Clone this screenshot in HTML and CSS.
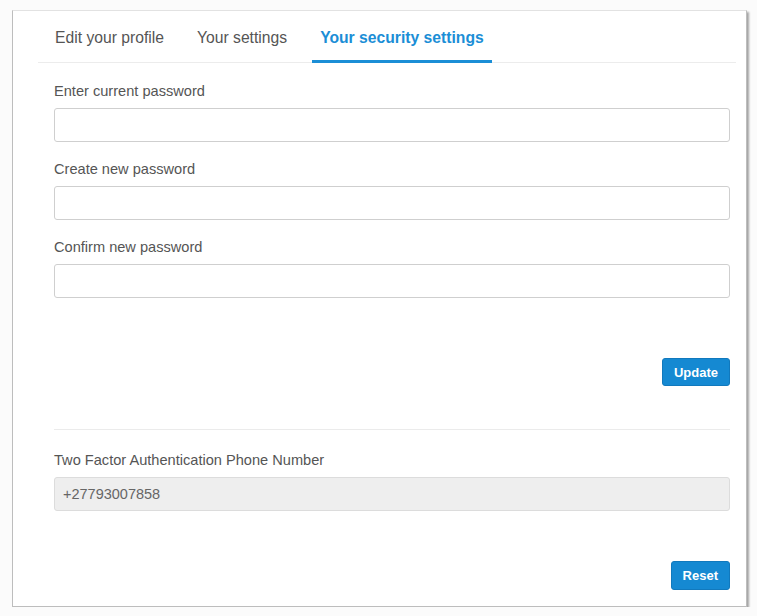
FILE: index.html
```html
<!DOCTYPE html>
<html lang="en">
<head>
<meta charset="utf-8">
<title>Your security settings</title>
<link rel="stylesheet" href="styles.css">
</head>
<body>
<div class="card">
  <nav class="tabs">
    <a class="tab">Edit your profile</a>
    <a class="tab">Your settings</a>
    <a class="tab active">Your security settings</a>
  </nav>
  <form class="form">
    <div class="field">
      <label class="label">Enter current password</label>
      <input class="input" type="password">
    </div>
    <div class="field">
      <label class="label">Create new password</label>
      <input class="input" type="password">
    </div>
    <div class="field">
      <label class="label">Confirm new password</label>
      <input class="input" type="password">
    </div>
    <div class="actions actions-update">
      <button type="button" class="btn">Update</button>
    </div>
    <hr class="sep">
    <div class="field">
      <label class="label">Two Factor Authentication Phone Number</label>
      <input class="input input-disabled" type="text" value="+27793007858" disabled>
    </div>
    <div class="actions actions-reset">
      <button type="button" class="btn">Reset</button>
    </div>
  </form>
</div>
</body>
</html>
```
FILE: styles.css
```css
* { box-sizing: border-box; }
html, body { margin: 0; padding: 0; }
body {
  background: #fbfbfb;
  font-family: "Liberation Sans", Arial, sans-serif;
  color: #555;
}
.card {
  margin: 10px 0 0 12px;
  width: 735px;
  height: 597px;
  background: #fff;
  border: 1px solid #bdbdbd;
  border-top-color: #e2e2e2;
  box-shadow: 2px 2px 2px rgba(0, 0, 0, 0.35);
}
.tabs {
  display: flex;
  gap: 17px;
  margin: 0 10px 0 25px;
  padding-left: 9px;
  border-bottom: 1px solid #ececec;
}
.tab {
  display: block;
  padding: 17px 8px 12px;
  line-height: 20px;
  font-size: 15.7px;
  color: #555;
  border-bottom: 3px solid transparent;
  margin-bottom: -1px;
  white-space: nowrap;
}
.tab.active {
  color: #1b8ed6;
  font-weight: bold;
  border-bottom-color: #1b8ed6;
}
.form {
  padding: 18px 16px 0 41px;
}
.field {
  display: flex;
  flex-direction: column;
  margin-bottom: 17px;
}
.label {
  font-size: 14.6px;
  line-height: 20px;
  margin-bottom: 7px;
  color: #555;
}
.input {
  height: 34px;
  width: 100%;
  border: 1px solid #cfcfcf;
  border-radius: 3px;
  background: #fff;
  font-family: "Liberation Sans", Arial, sans-serif;
  font-size: 14.5px;
  color: #555;
  padding: 0 8px;
  margin: 0;
}
.input-disabled {
  background: #eeeeee;
  border-color: #dcdcdc;
  color: #666;
  -webkit-text-fill-color: #666;
  opacity: 1;
}
.actions {
  display: flex;
  justify-content: flex-end;
}
.actions-update { margin-top: 60px; }
.actions-reset { margin-top: 50px; }
.btn {
  height: 28px;
  padding: 0 11px;
  margin: 0;
  background: #1589d2;
  border: 1px solid #1179bd;
  border-radius: 3px;
  color: #fff;
  font-family: "Liberation Sans", Arial, sans-serif;
  font-size: 13px;
  font-weight: bold;
  cursor: pointer;
}
.actions-reset .btn { height: 29px; }
.sep {
  border: 0;
  border-top: 1px solid #ebebeb;
  margin: 43px 0 20px;
  height: 0;
}
```
